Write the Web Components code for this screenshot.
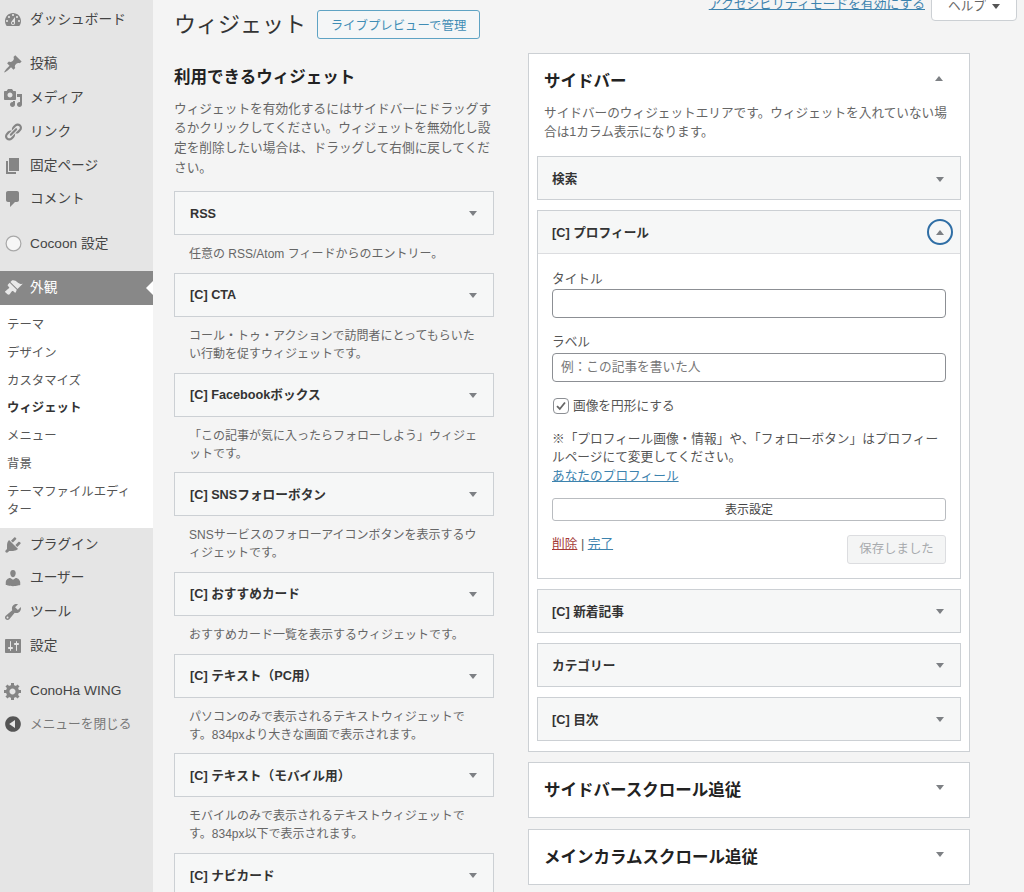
<!DOCTYPE html>
<html lang="ja">
<head>
<meta charset="utf-8">
<title>ウィジェット</title>
<style>
html,body{margin:0;padding:0;height:892px;overflow:hidden;background:#f4f4f4}
body{font-family:"Liberation Sans","Noto Sans CJK JP",sans-serif;color:#444}
</style>
</head>
<body>
<wp-shell>
  <wp-menu slot="menu">
    <wp-item icon="dashboard">ダッシュボード</wp-item>
    <wp-sep></wp-sep>
    <wp-item icon="post">投稿</wp-item>
    <wp-item icon="media">メディア</wp-item>
    <wp-item icon="links">リンク</wp-item>
    <wp-item icon="page">固定ページ</wp-item>
    <wp-item icon="comments">コメント</wp-item>
    <wp-sep></wp-sep>
    <wp-item icon="circle">Cocoon 設定</wp-item>
    <wp-sep></wp-sep>
    <wp-item icon="appearance" active>外観</wp-item>
    <wp-submenu>
      <wp-sublink>テーマ</wp-sublink>
      <wp-sublink>デザイン</wp-sublink>
      <wp-sublink>カスタマイズ</wp-sublink>
      <wp-sublink current>ウィジェット</wp-sublink>
      <wp-sublink>メニュー</wp-sublink>
      <wp-sublink>背景</wp-sublink>
      <wp-sublink>テーマファイルエディター</wp-sublink>
    </wp-submenu>
    <wp-item icon="plugins">プラグイン</wp-item>
    <wp-item icon="users">ユーザー</wp-item>
    <wp-item icon="tools">ツール</wp-item>
    <wp-item icon="settings">設定</wp-item>
    <wp-sep last></wp-sep>
    <wp-item icon="gear">ConoHa WING</wp-item>
    <wp-item icon="collapse" muted>メニューを閉じる</wp-item>
  </wp-menu>

  <wp-header slot="header"></wp-header>

  <wp-column slot="left">
    <h-two>利用できるウィジェット</h-two>
    <wp-intro>ウィジェットを有効化するにはサイドバーにドラッグするかクリックしてください。ウィジェットを無効化し設定を削除したい場合は、ドラッグして右側に戻してください。</wp-intro>
    <avail-widget name="RSS">任意の RSS/Atom フィードからのエントリー。</avail-widget>
    <avail-widget name="[C] CTA">コール・トゥ・アクションで訪問者にとってもらいたい行動を促すウィジェットです。</avail-widget>
    <avail-widget name="[C] Facebookボックス">「この記事が気に入ったらフォローしよう」ウィジェットです。</avail-widget>
    <avail-widget name="[C] SNSフォローボタン">SNSサービスのフォローアイコンボタンを表示するウィジェットです。</avail-widget>
    <avail-widget name="[C] おすすめカード">おすすめカード一覧を表示するウィジェットです。</avail-widget>
    <avail-widget name="[C] テキスト（PC用）">パソコンのみで表示されるテキストウィジェットです。834pxより大きな画面で表示されます。</avail-widget>
    <avail-widget name="[C] テキスト（モバイル用）">モバイルのみで表示されるテキストウィジェットです。834px以下で表示されます。</avail-widget>
    <avail-widget name="[C] ナビカード"></avail-widget>
  </wp-column>

  <wp-column slot="right">
    <side-area name="サイドバー" open desc="サイドバーのウィジェットエリアです。ウィジェットを入れていない場合は1カラム表示になります。">
      <side-widget name="検索"></side-widget>
      <side-widget name="[C] プロフィール" open><profile-form></profile-form></side-widget>
      <side-widget name="[C] 新着記事"></side-widget>
      <side-widget name="カテゴリー"></side-widget>
      <side-widget name="[C] 目次"></side-widget>
    </side-area>
    <side-area name="サイドバースクロール追従"></side-area>
    <side-area name="メインカラムスクロール追従"></side-area>
  </wp-column>
</wp-shell>

<script>
const ICONS={
dashboard:"M3.76 16h12.48c1.1-1.37 1.76-3.11 1.76-5 0-4.42-3.58-8-8-8s-8 3.58-8 8c0 1.89.66 3.63 1.76 5zM10 4c.55 0 1 .45 1 1s-.45 1-1 1-1-.45-1-1 .45-1 1-1zM6 6c.55 0 1 .45 1 1s-.45 1-1 1-1-.45-1-1 .45-1 1-1zm8 0c.55 0 1 .45 1 1s-.45 1-1 1-1-.45-1-1 .45-1 1-1zm-5.37 5.55L12 7v6c0 1.1-.9 2-2 2s-2-.9-2-2c0-.57.24-1.08.63-1.45zM4 10c.55 0 1 .45 1 1s-.45 1-1 1-1-.45-1-1 .45-1 1-1zm12 0c.55 0 1 .45 1 1s-.45 1-1 1-1-.45-1-1 .45-1 1-1zm-5 3c0-.55-.45-1-1-1s-1 .45-1 1 .45 1 1 1 1-.45 1-1z",
post:"M10.44 3.02l1.82-1.82 6.36 6.35-1.83 1.82c-1.05-.68-2.48-.57-3.41.36l-.75.75c-.92.93-1.04 2.35-.35 3.41l-1.83 1.82-2.41-2.41-2.8 2.79c-.42.42-3.38 2.71-3.8 2.29s1.86-3.39 2.28-3.81l2.79-2.79L4.1 9.36l1.83-1.82c1.05.69 2.48.57 3.4-.36l.75-.75c.93-.92 1.05-2.35.36-3.41z",
media:"M13 11V4c0-.55-.45-1-1-1h-1.67L9 1H5L3.67 3H2c-.55 0-1 .45-1 1v7c0 .55.45 1 1 1h10c.55 0 1-.45 1-1zM7 4.5c1.38 0 2.5 1.12 2.5 2.5S8.38 9.5 7 9.5 4.5 8.38 4.5 7 5.62 4.5 7 4.5zM14 6h5v10.5c0 1.38-1.12 2.5-2.5 2.5S14 17.88 14 16.5s1.12-2.5 2.5-2.5c.17 0 .34.02.5.05V9h-3V6zm-4 8.05V13h2v3.5c0 1.38-1.12 2.5-2.5 2.5S7 17.88 7 16.5 8.12 14 9.5 14c.17 0 .34.02.5.05z",
links:"M17.74 2.76c1.68 1.69 1.68 4.41 0 6.1l-1.53 1.52c-1.12 1.12-2.7 1.47-4.14 1.09l2.62-2.61.76-.77.76-.76c.84-.84.84-2.2 0-3.04-.84-.85-2.2-.85-3.04 0l-.77.76-3.38 3.38c-.37-1.44-.02-3.02 1.1-4.14l1.52-1.53c1.69-1.68 4.42-1.68 6.1 0zM8.59 13.43l5.34-5.34c.42-.42.42-1.1 0-1.52-.44-.43-1.13-.39-1.53 0l-5.33 5.34c-.42.42-.42 1.1 0 1.52.44.43 1.13.39 1.52 0zm-.76 2.29l4.14-4.15c.38 1.44.03 3.02-1.09 4.14l-1.52 1.53c-1.69 1.68-4.41 1.68-6.1 0-1.68-1.68-1.68-4.42 0-6.1l1.53-1.52c1.12-1.12 2.7-1.47 4.14-1.1l-4.14 4.15c-.85.84-.85 2.2 0 3.05.84.84 2.2.84 3.04 0z",
page:"M6 15V2h10v13H6zm-1 1h8v2H3V5h2v11z",
comments:"M5 2h9c1.1 0 2 .9 2 2v7c0 1.1-.9 2-2 2h-2l-5 5v-5H5c-1.1 0-2-.9-2-2V4c0-1.1.9-2 2-2z",
appearance:"M14.48 11.06L7.41 3.99l1.5-1.5c.5-.56 2.3-.47 3.51.32 1.21.8 1.43 1.28 2.91 2.1 1.18.64 2.45 1.26 4.45.85zm-.71.71L6.7 4.7 4.93 6.47c-.39.39-.39 1.02 0 1.41l1.06 1.06c.39.39.39 1.03 0 1.42-.6.6-1.43 1.11-2.21 1.69-.35.26-.7.53-1.01.84C1.43 13.23 2 13.9 3.2 15.1s1.87 1.77 3.2 1.43c.3-.3.58-.66.84-1.01.58-.78 1.09-1.61 1.69-2.21.39-.39 1.03-.39 1.42 0l1.06 1.06c.39.39 1.02.39 1.41 0z",
plugins:"M13.11 4.36L9.87 7.6 8 5.73l3.24-3.24c.35-.34 1.05-.2 1.56.32.52.51.66 1.21.31 1.55zm-8 1.77l.91-1.12 9.01 9.01-1.19.84c-.71.71-2.63 1.16-3.82 1.16H6.14L4.9 17.26c-.59.59-1.54.59-2.12 0-.59-.58-.59-1.53 0-2.12l1.24-1.24v-3.88c0-1.13.4-3.19 1.09-3.89zm7.26 3.97l3.24-3.24c.34-.35 1.04-.21 1.55.31.52.51.66 1.21.31 1.55l-3.24 3.25z",
users:"M10 9.25c-2.27 0-2.73-3.44-2.73-3.44C7 4.02 7.82 2 9.97 2c2.16 0 2.98 2.02 2.71 3.81 0 0-.41 3.44-2.68 3.44zm0 2.57L12.72 10c2.39 0 4.52 2.33 4.52 4.53v2.49s-3.65 1.13-7.24 1.13c-3.65 0-7.24-1.13-7.24-1.13v-2.49c0-2.25 1.94-4.48 4.47-4.48z",
tools:"M16.68 9.77c-1.34 1.34-3.3 1.67-4.95.99l-5.41 6.52c-.99.99-2.59.99-3.58 0s-.99-2.59 0-3.57l6.52-5.42c-.68-1.65-.35-3.61.99-4.95 1.28-1.28 3.12-1.62 4.72-1.06l-2.89 2.89 2.82 2.82 2.86-2.87c.53 1.58.18 3.39-1.08 4.65zM3.81 16.21c.4.39 1.04.39 1.43 0 .4-.4.4-1.04 0-1.43-.39-.4-1.03-.4-1.43 0-.39.39-.39 1.03 0 1.43z",
settings:"M18 16V4c0-.55-.45-1-1-1H3c-.55 0-1 .45-1 1v12c0 .55.45 1 1 1h14c.55 0 1-.45 1-1zM8 11h1c.55 0 1 .45 1 1s-.45 1-1 1H8v1.5c0 .28-.22.5-.5.5s-.5-.22-.5-.5V13H6c-.55 0-1-.45-1-1s.45-1 1-1h1V5.5c0-.28.22-.5.5-.5s.5.22.5.5V11zm5-2h-1c-.55 0-1-.45-1-1s.45-1 1-1h1V5.5c0-.28.22-.5.5-.5s.5.22.5.5V7h1c.55 0 1 .45 1 1s-.45 1-1 1h-1v5.5c0 .28-.22.5-.5.5s-.5-.22-.5-.5V9z",
gear:"M18 12h-2.18c-.17.7-.44 1.35-.81 1.93l1.54 1.54-2.1 2.1-1.54-1.54c-.58.36-1.23.63-1.91.79V19H8v-2.18c-.68-.16-1.33-.43-1.91-.79l-1.54 1.54-2.12-2.12 1.54-1.54c-.36-.58-.63-1.23-.79-1.91H1V9.03h2.17c.16-.7.44-1.35.8-1.94L2.43 5.55l2.1-2.1 1.54 1.54c.58-.37 1.24-.64 1.93-.81V2h3v2.18c.68.16 1.33.43 1.91.79l1.54-1.54 2.12 2.12-1.54 1.54c.36.59.64 1.24.8 1.94H18V12zm-8.5 1.5c1.66 0 3-1.34 3-3s-1.34-3-3-3-3 1.34-3 3 1.34 3 3 3z",
collapse:"M10 2.16c4.33 0 7.84 3.51 7.84 7.84s-3.51 7.84-7.84 7.84S2.16 14.33 2.16 10 5.71 2.16 10 2.16zm2 11.72V6.12L6.18 9.97z"
};
const FONT='"Liberation Sans","Noto Sans CJK JP",sans-serif';
const tri=(up,color='#7d8084')=>`<svg width="8" height="5" viewBox="0 0 8 5" aria-hidden="true"><path fill="${color}" d="${up?'M4 0 8 5H0z':'M0 0h8L4 5z'}"/></svg>`;
function def(name,render){
  customElements.define(name,class extends HTMLElement{
    constructor(){super();this.attachShadow({mode:'open'})}
    connectedCallback(){this.shadowRoot.innerHTML=render(this)}
  });
}
def('wp-shell',()=>`<style>
:host{display:grid;grid-template-columns:153px 1fr;height:892px;overflow:hidden;background:#f4f4f4}
.side{background:#e5e5e5;min-width:0}
.main{padding:0 7px 0 21px;min-width:0;overflow:hidden}
.cols{display:grid;grid-template-columns:320px 442px;column-gap:34px;align-items:start}
</style>
<div class="side"><slot name="menu"></slot></div>
<div class="main"><slot name="header"></slot><div class="cols"><slot name="left"></slot><slot name="right"></slot></div></div>`);
def('wp-menu',()=>`<style>:host{display:block;padding-top:3.4px}</style><slot></slot>`);
def('wp-sep',el=>`<style>:host{display:block;height:${el.hasAttribute('last')?11:10.4}px}</style>`);
def('wp-item',el=>{
  const a=el.hasAttribute('active'),m=el.hasAttribute('muted');
  const ic=el.getAttribute('icon');
  const glyph=ic==='circle'
    ?`<svg width="17" height="17" viewBox="0 0 17 17"><circle cx="8.5" cy="8.5" r="7.4" fill="#f6f6f6" stroke="#a8a8a8" stroke-width="1.2"/></svg>`
    :`<svg width="20" height="20" viewBox="0 0 20 20"><path fill="${a?'#e8e8e8':(m?'#555':'#858585')}" d="${ICONS[ic]}"/></svg>`;
  return `<style>
:host{display:flex;align-items:center;height:33.75px;position:relative;background:${a?'#888':'transparent'};color:${a?'#fff':(m?'#777':'#444')};font:${m?12.7:13.7}px/18px ${FONT};white-space:nowrap}
.i{width:20px;height:20px;margin-left:3px;margin-right:7px;display:flex;align-items:center;justify-content:center;flex:none}
.notch{position:absolute;right:0;top:10px;border:7px solid transparent;border-right-color:#fff;border-left-width:0}
</style><span class="i">${glyph}</span><slot></slot>${a?'<span class="notch"></span>':''}`;
});
def('wp-submenu',()=>`<style>:host{display:block;background:#fff;padding:6.5px 0 4.3px}</style><slot></slot>`);
def('wp-sublink',el=>`<style>:host{display:block;padding:4.9px 18px 4.9px 7px;font:${el.hasAttribute('current')?700:400} 12.4px/18px ${FONT};color:${el.hasAttribute('current')?'#333':'#555'}}</style><slot></slot>`);
def('wp-header',()=>`<style>
:host{display:flex;justify-content:space-between;align-items:flex-start;height:53px}
.l{display:flex;align-items:center;padding-top:10px;gap:11px}
h1{margin:0;font:400 22px/29px ${FONT};color:#333}
.btn{box-sizing:border-box;height:29px;width:163px;display:flex;align-items:center;justify-content:center;border:1px solid #5ea3c4;border-radius:3px;color:#3f8db5;font-size:12.4px;background:#f4f6f7}
.r{display:flex;align-items:flex-end;gap:6px;margin-top:-9px}
a{color:#3d83ae;font-size:12.8px;line-height:24px;text-decoration:underline;white-space:nowrap;position:relative;top:-5px}
.help{box-sizing:border-box;width:86px;height:30px;background:#fff;border:1px solid #ccd0d4;border-radius:0 0 4px 4px;display:flex;align-items:flex-end;justify-content:center;gap:6px;padding-bottom:5px;color:#666;font-size:12.7px;line-height:18px}
.help svg{margin-bottom:6px}
</style>
<div class="l"><h1>ウィジェット</h1><span class="btn">ライブプレビューで管理</span></div>
<div class="r"><a>アクセシビリティモードを有効にする</a><span class="help">ヘルプ ${tri(false,'#555')}</span></div>`);
def('wp-column',()=>`<style>:host{display:block;min-width:0}</style><slot></slot>`);
def('h-two',()=>`<style>:host{display:block;font:700 16.5px/24px ${FONT};color:#222;margin-top:12px}</style><slot></slot>`);
def('wp-intro',()=>`<style>:host{display:block;font:12.7px/19.8px ${FONT};color:#666;margin:10.5px 0 12.5px}</style><slot></slot>`);
def('avail-widget',el=>`<style>
:host{display:block}
.bar{box-sizing:border-box;height:44px;padding:1px 16px 0 15px;display:flex;align-items:center;justify-content:space-between;background:#f6f7f7;border:1px solid #ccd0d4;font:700 12.7px/18px ${FONT};color:#333}
.d{padding:10px 15px 0;margin-bottom:9.7px;font:12px/18px ${FONT};color:#666}
</style><div class="bar"><span>${el.getAttribute('name')}</span>${tri(false)}</div><div class="d"><slot></slot></div>`);
def('side-area',el=>{
  const open=el.hasAttribute('open'),d=el.getAttribute('desc');
  return `<style>
:host{display:block;background:#fff;border:1px solid #ccd0d4;box-sizing:border-box;margin-bottom:10.4px}
.h{display:flex;justify-content:space-between;align-items:flex-start;padding:15px ${open?26:25}px 0 15px;height:${open?26:39}px}
h3{margin:0;font:700 16.5px/24px ${FONT};color:#222}
.h svg{margin-top:7px}
p{margin:9px 15px 14px;font:12.65px/19px ${FONT};color:#666}
.list{padding:0 8px}
</style><div class="h"><h3>${el.getAttribute('name')}</h3>${tri(open)}</div>
${open?`<p>${d}</p><div class="list"><slot></slot></div>`:''}`;
});
def('side-widget',el=>{
  const open=el.hasAttribute('open');
  return `<style>
:host{display:block;margin-bottom:10px;border:1px solid #ccd0d4;background:#fff}
.bar{box-sizing:border-box;height:${open?43:42}px;display:flex;align-items:center;justify-content:space-between;padding:2px 16px 0 14px;background:#f6f7f7;font:700 12.7px/18px ${FONT};color:#333;${open?'border-bottom:1px solid #dcdde0':''}}
.c{border:2px solid #2f6ea5;border-radius:50%;display:flex;align-items:center;justify-content:center;margin:-2px -9px 0 0;box-sizing:border-box;width:26px;height:26px}
</style><div class="bar"><span>${el.getAttribute('name')}</span>${open?`<span class="c">${tri(true)}</span>`:tri(false)}</div>${open?'<slot></slot>':''}`;
});
def('profile-form',()=>`<style>
:host{display:block;padding:15.5px 14px 14px;font:12.7px/18px ${FONT};color:#555}
label{display:block}
.inp{box-sizing:border-box;height:29px;border:1px solid #8c8f94;border-radius:4px;background:#fff;margin:1.5px 0 15px;display:flex;align-items:center;padding:0 8px;color:#777;font-size:12.7px}
.ck{display:flex;align-items:center;gap:4px;margin:15.5px 0 14.5px;color:#555}
.box{box-sizing:border-box;width:16px;height:16px;border:1px solid #8c8f94;border-radius:4px;display:flex;align-items:center;justify-content:center;background:#fff;margin-left:1px}
.note{margin:0;line-height:18.6px}
a{color:#3d83ae;text-decoration:underline}
.full{box-sizing:border-box;height:23px;margin-top:12.5px;padding-top:1px;border:1px solid #b9bcc0;border-radius:3px;background:#fff;display:flex;align-items:center;justify-content:center;font-size:12px;color:#444}
.act{display:flex;justify-content:space-between;align-items:flex-start;margin-top:14px}
.del{color:#a53a36}
.save{box-sizing:border-box;width:99px;height:29px;background:#f4f5f5;border:1px solid #dcdde0;border-radius:3px;display:flex;align-items:center;justify-content:center;color:#a7aaad;font-size:12.4px}
</style>
<label>タイトル</label><div class="inp"></div>
<label>ラベル</label><div class="inp">例：この記事を書いた人</div>
<div class="ck"><span class="box"><svg width="12" height="12" viewBox="0 0 12 12"><path d="M2 6.2 4.8 9 10 2.5" fill="none" stroke="#666" stroke-width="1.8"/></svg></span>画像を円形にする</div>
<p class="note">※「プロフィール画像・情報」や、「フォローボタン」はプロフィールページにて変更してください。<br><a>あなたのプロフィール</a></p>
<div class="full">表示設定</div>
<div class="act"><span class="l"><a class="del">削除</a> | <a>完了</a></span><span class="save">保存しました</span></div>`);
</script>
</body>
</html>
